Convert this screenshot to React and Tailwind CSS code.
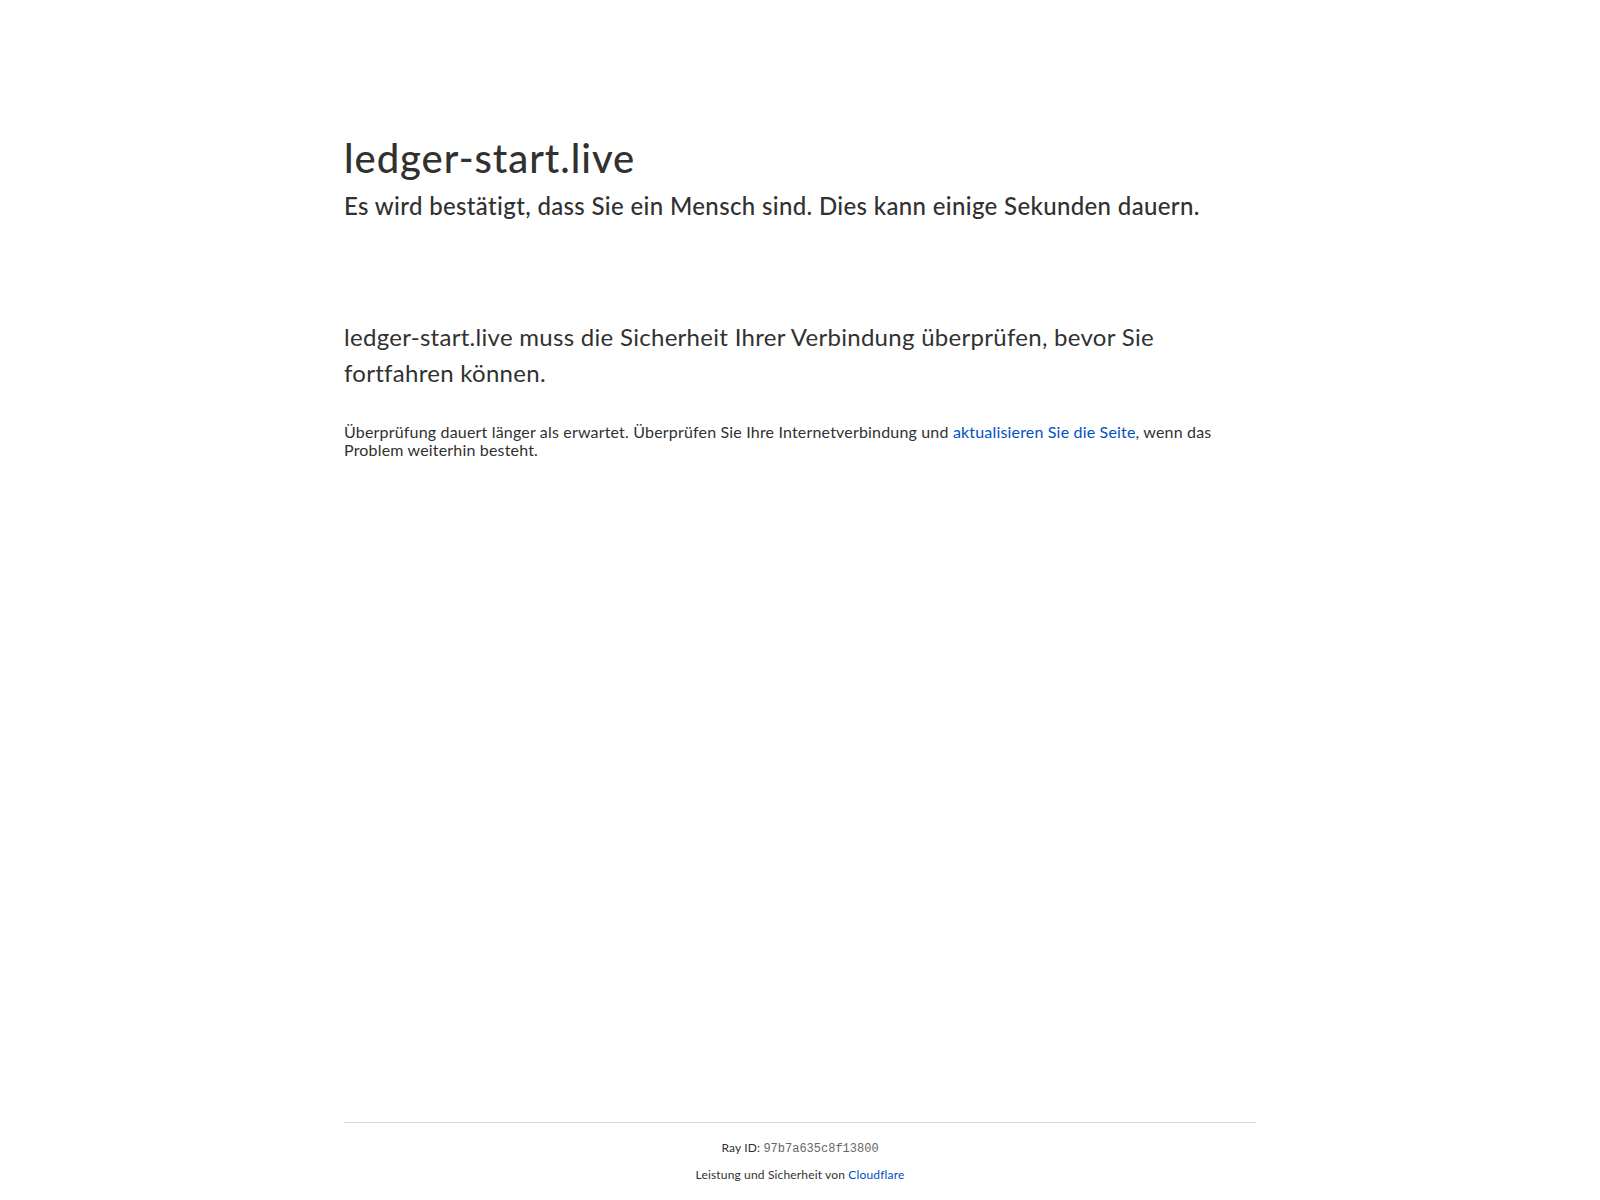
import React from 'react';

const App = () => {
  return (
    <div className="flex min-h-screen flex-col bg-white text-[#313131] font-['Lato','Noto_Sans',sans-serif]">
      <main className="mx-auto mt-32 w-full max-w-[60rem] flex-1 px-6">
        <h1 className="text-[40px] font-medium leading-[60px] tracking-[0.024em]">ledger-start.live</h1>
        <h2 className="text-2xl font-medium leading-9 tracking-[0.0145em]">
          Es wird bestätigt, dass Sie ein Mensch sind. Dies kann einige Sekunden dauern.
        </h2>
        <p className="mt-[95px] text-2xl font-normal leading-9 tracking-[0.012em]">
          ledger-start.live muss die Sicherheit Ihrer Verbindung überprüfen, bevor Sie fortfahren können.
        </p>
        <p className="mt-8 text-base leading-[18px] tracking-[0.011em]">
          Überprüfung dauert länger als erwartet. Überprüfen Sie Ihre Internetverbindung und{' '}
          <a href="#" className="text-[#0051c3]">aktualisieren Sie die Seite</a>, wenn das Problem weiterhin besteht.
        </p>
      </main>
      <footer className="mx-auto w-full max-w-[60rem] px-6 text-xs leading-[18px] tracking-[0.013em]">
        <div className="border-t border-[#d9d9d9] py-4 text-center">
          <div>
            Ray ID: <code className="font-['Liberation_Mono',monospace] tracking-normal text-[#666666]">97b7a635c8f13800</code>
          </div>
          <div className="mt-2">
            Leistung und Sicherheit von <a href="#" className="text-[#0051c3]">Cloudflare</a>
          </div>
        </div>
      </footer>
    </div>
  );
};

export default App;
